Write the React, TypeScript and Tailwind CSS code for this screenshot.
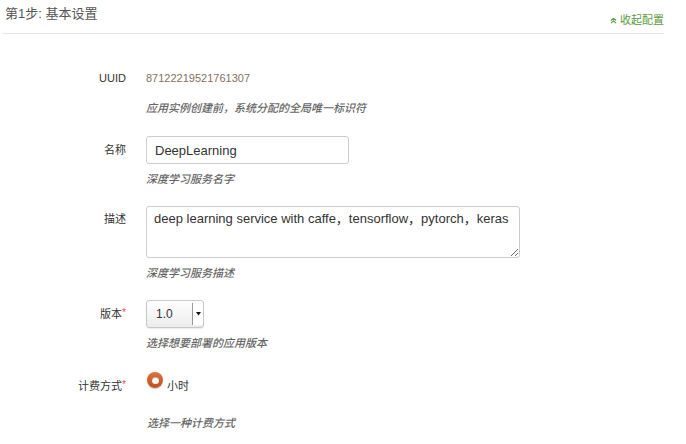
const font = { fontFamily: '"Liberation Sans", "Noto Sans CJK SC", sans-serif' };

const Hint = ({ children }: { children: React.ReactNode }) => (
  <div className="mt-[7px] h-4 text-[11px] leading-4 italic font-medium text-[#666]">{children}</div>
);

const Label = ({ text, required = false, className = "" }: { text: string; required?: boolean; className?: string }) => (
  <div className={`w-[128px] shrink-0 pr-[2px] text-right text-[11px] text-[#333] ${className}`}>
    {text}
    {required && <span className="text-[#d9534f] text-[10px] relative top-[-2px]">*</span>}
  </div>
);

export default function App() {
  return (
    <div className="w-[686px] h-[444px] bg-white overflow-hidden" style={font}>
      {/* Header */}
      <div className="ml-[2px] w-[662px] h-[34px] border-b border-[#e6e6e6] flex justify-between items-start">
        <div className="pl-[3px] pt-[6px] text-[13px] leading-4 text-[#555]">第1步: 基本设置</div>
        <div className="pt-[12px] flex items-center gap-[3px] text-[11px] leading-4 text-[#5b9a3c]">
          <svg width="7" height="7" viewBox="0 0 8 8" fill="none" stroke="#5b9a3c" strokeWidth="1.2">
            <path d="M1 4 L4 1.5 L7 4" />
            <path d="M1 7 L4 4.5 L7 7" />
          </svg>
          收起配置
        </div>
      </div>

      <div className="pt-[36px]">
        {/* UUID */}
        <div className="flex">
          <Label text="UUID" className="leading-4" />
          <div className="ml-[18px]">
            <div className="text-[11px] leading-4 text-[#85705f]">87122219521761307</div>
            <div className="mt-[14px] h-4 text-[11px] leading-4 italic font-medium text-[#666]">
              应用实例创建前，系统分配的全局唯一标识符
            </div>
          </div>
        </div>

        {/* 名称 */}
        <div className="flex mt-[20px]">
          <Label text="名称" className="leading-[28px]" />
          <div className="ml-[18px]">
            <input
              readOnly
              defaultValue="DeepLearning"
              className="w-[203px] h-[28px] border border-[#cccccc] rounded-[3px] px-[8px] text-[13px] text-[#333] outline-none"
              style={font}
            />
            <Hint>深度学习服务名字</Hint>
          </div>
        </div>

        {/* 描述 */}
        <div className="flex mt-[19px]">
          <Label text="描述" className="pt-[5px] leading-4" />
          <div className="ml-[18px]">
            <textarea
              readOnly
              defaultValue="deep learning service with caffe，tensorflow，pytorch，keras"
              className="block w-[374px] h-[52px] border border-[#cccccc] rounded-[3px] px-[7px] py-[3px] text-[13px] leading-[18px] text-[#333] outline-none"
              style={font}
            />
            <Hint>深度学习服务描述</Hint>
          </div>
        </div>

        {/* 版本 */}
        <div className="flex mt-[19px]">
          <Label text="版本" required className="leading-[28px]" />
          <div className="ml-[18px]">
            <div className="w-[58px] h-[28px] border border-[#c8c8c8] rounded-[3px] bg-gradient-to-b from-white to-[#ececec] flex items-stretch shadow-[0_1px_1px_rgba(0,0,0,0.08)]">
              <div className="flex-1 pl-[9px] text-[12px] leading-[26px] text-[#333]">1.0</div>
              <div className="w-[11px] my-[2px] border-l border-[#9a9a9a] bg-white flex items-center justify-center">
                <svg width="5" height="4" viewBox="0 0 5 4">
                  <path d="M0 0 H5 L2.5 3.5 Z" fill="#111" />
                </svg>
              </div>
            </div>
            <Hint>选择想要部署的应用版本</Hint>
          </div>
        </div>

        {/* 计费方式 */}
        <div className="flex mt-[21px]">
          <Label text="计费方式" required className="pt-[6px] leading-4" />
          <div className="ml-[19px]">
            <div className="flex items-start">
              <div className="w-[16px] h-[16px] rounded-full bg-gradient-to-b from-[#e2703a] to-[#c2501f] flex items-center justify-center shadow-[0_1px_1px_rgba(0,0,0,0.2)]">
                <div className="w-[7px] h-[7px] rounded-full bg-white shadow-[inset_0_1px_1px_rgba(0,0,0,0.3)]" />
              </div>
              <span className="ml-[4px] mt-[6px] text-[11px] leading-4 text-[#333]">小时</span>
            </div>
            <div className="mt-[21px] h-4 text-[11px] leading-4 italic font-medium text-[#666]">选择一种计费方式</div>
          </div>
        </div>
      </div>
    </div>
  );
}
